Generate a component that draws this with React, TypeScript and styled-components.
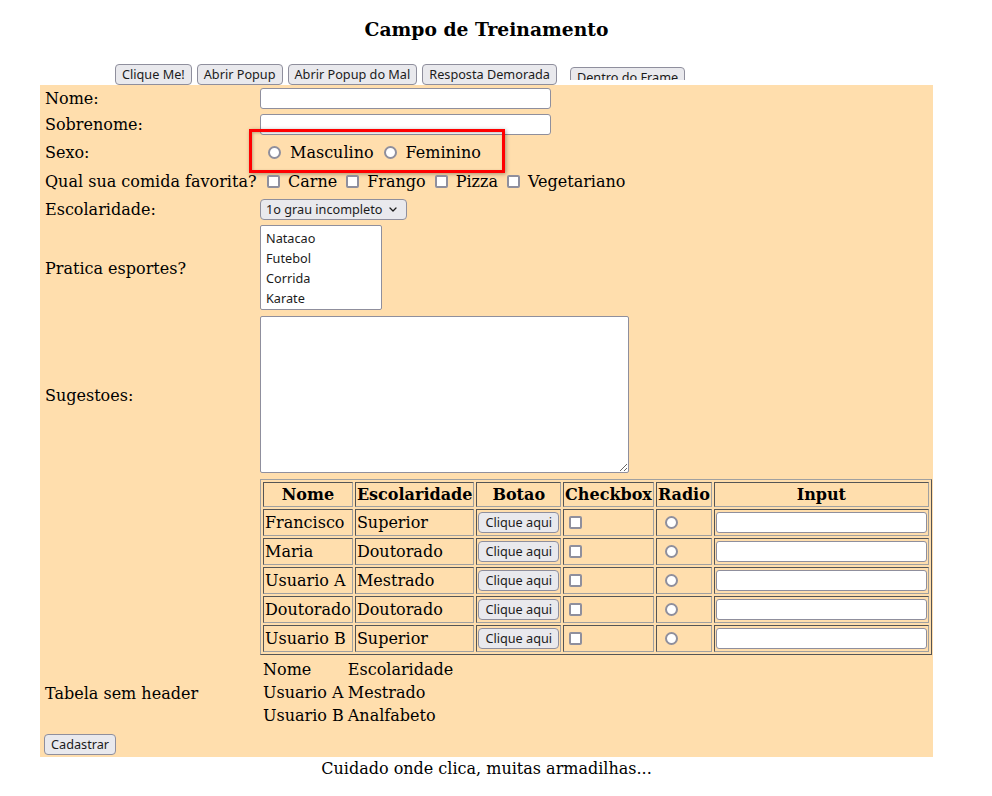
import styled, { createGlobalStyle, css } from 'styled-components';

const GlobalStyles = createGlobalStyle`
  html, body {
    margin: 0;
    padding: 0;
    background: #fff;
  }
  body {
    font-family: "DejaVu Serif", serif;
    font-size: 16px;
    color: #000;
  }
`;

const controlFont = `"Noto Sans", "DejaVu Sans", sans-serif`;

const Page = styled.main`
  width: 893px;
  margin-left: 40px;
`;

const Heading = styled.h3`
  margin: 0;
  padding-top: 18px;
  font-size: 18.72px;
  line-height: 22px;
  font-weight: bold;
  text-align: center;
`;

const ButtonBar = styled.div`
  display: flex;
  align-items: flex-start;
  gap: 5px;
  height: 21px;
  margin-top: 24px;
  padding-left: 75px;
`;

const ActionButton = styled.button`
  box-sizing: border-box;
  height: 21px;
  margin: 0;
  padding: 0 6px;
  border: 1px solid #8f8f9d;
  border-radius: 4px;
  background: #e9e9ed;
  color: #1b1b1b;
  font-family: ${controlFont};
  font-size: 12.7px;
  line-height: 19px;
  white-space: nowrap;
  cursor: pointer;
`;

const FrameWindow = styled.div`
  margin: 3px 0 0 8px;
  height: 13px;
  overflow: hidden;
`;

const FormPanel = styled.form`
  display: grid;
  grid-template-columns: 215px 1fr;
  grid-template-rows: 21px 21px 24px 24px 22px 86px 158px 176px 69px 21px;
  row-gap: 5px;
  align-items: center;
  padding: 3px 3px 2px 5px;
  background: #ffdead;
`;

const FieldLabel = styled.label<{ $lift?: number }>`
  grid-column: 1;
  margin-top: ${(p) => -(p.$lift ?? 0)}px;
  white-space: nowrap;
  line-height: 19px;
`;

const Field = styled.div<{ $align?: 'start' | 'center' | 'stretch' }>`
  grid-column: 2;
  display: flex;
  align-items: center;
  align-self: ${(p) => p.$align ?? 'center'};
`;

const TextInput = styled.input<{ $width: number }>`
  box-sizing: border-box;
  width: ${(p) => p.$width}px;
  height: 21px;
  margin: 0;
  padding: 0 4px;
  border: 1px solid #8f8f9d;
  border-radius: 3px;
  background: #fff;
  font-family: ${controlFont};
  font-size: 12.7px;
`;

const ChoiceGroup = styled.div<{ $highlight?: boolean; $inset: number; $gap: number }>`
  position: relative;
  display: flex;
  align-items: center;
  gap: ${(p) => p.$gap}px;
  height: 100%;
  padding-left: ${(p) => p.$inset}px;

  ${(p) =>
    p.$highlight &&
    css`
      &::after {
        content: '';
        position: absolute;
        left: -11px;
        top: -11px;
        width: 256px;
        height: 44px;
        box-sizing: border-box;
        border: 3px solid #ff0000;
        box-shadow: 1px 1px 4px rgba(0, 0, 0, 0.35), inset 1px 1px 3px rgba(0, 0, 0, 0.25);
        pointer-events: none;
      }
    `}
`;

const Choice = styled.label<{ $gap: number }>`
  display: inline-flex;
  align-items: center;
  gap: ${(p) => p.$gap}px;
  line-height: 19px;
  white-space: nowrap;
`;

const Tick = styled.input<{ $inset?: number }>`
  appearance: none;
  box-sizing: border-box;
  flex: none;
  width: 13px;
  height: 13px;
  margin: 0 0 0 ${(p) => p.$inset ?? 0}px;
  border: 2px solid #8f8f9d;
  border-radius: ${(p) => (p.type === 'radio' ? '50%' : '2px')};
  background: #fff;
`;

const SelectBox = styled.div`
  box-sizing: border-box;
  display: flex;
  align-items: center;
  justify-content: space-between;
  width: 147px;
  height: 21px;
  padding: 0 9px 0 5px;
  border: 1px solid #8f8f9d;
  border-radius: 4px;
  background: #e9e9ed;
  color: #1b1b1b;
  font-family: ${controlFont};
  font-size: 12.7px;
  white-space: nowrap;
`;

const ListBox = styled.ul`
  box-sizing: border-box;
  width: 122px;
  height: 85px;
  margin: 0;
  padding: 2px 0;
  list-style: none;
  overflow: hidden;
  border: 1px solid #8f8f9d;
  border-radius: 2px;
  background: #fff;
  color: #1b1b1b;
  font-family: ${controlFont};
  font-size: 12.7px;
`;

const ListOption = styled.li`
  height: 20px;
  padding: 0 5px;
  line-height: 20px;
`;

const NotesArea = styled.textarea`
  box-sizing: border-box;
  width: 369px;
  height: 157px;
  margin: 0;
  border: 1px solid #8f8f9d;
  border-radius: 2px;
  background: #fff;
`;

const DataTable = styled.table`
  border-collapse: separate;
  border-spacing: 2px;
  border: 1px solid;
  border-color: #a0a0a0 #555 #555 #a0a0a0;
  font-size: 16px;
`;

const HeaderRow = styled.tr`
  height: 25px;
`;

const BodyRow = styled.tr`
  height: 27px;
`;

const cellBorder = css`
  padding: 1px;
  border: 1px solid;
  border-color: #555 #a0a0a0 #a0a0a0 #555;
  white-space: nowrap;
  vertical-align: middle;
`;

const HeadCell = styled.th`
  ${cellBorder};
  font-weight: bold;
  text-align: center;
`;

const Cell = styled.td`
  ${cellBorder};
  text-align: left;
`;

const CellControl = styled.div`
  display: flex;
  align-items: center;
`;

const PlainTable = styled.table`
  border-collapse: separate;
  border-spacing: 2px;
  margin-top: -4px;
`;

const PlainCell = styled.td`
  padding: 1px;
  line-height: 19px;
  white-space: nowrap;
`;

const SubmitButton = styled(ActionButton)`
  grid-column: 1;
  justify-self: start;
  margin-left: -1px;
`;

const Footer = styled.p`
  margin: 2px 0 0;
  line-height: 19px;
  text-align: center;
`;

const people = [
  { name: 'Francisco', level: 'Superior' },
  { name: 'Maria', level: 'Doutorado' },
  { name: 'Usuario A', level: 'Mestrado' },
  { name: 'Doutorado', level: 'Doutorado' },
  { name: 'Usuario B', level: 'Superior' },
];

const foods = ['Carne', 'Frango', 'Pizza', 'Vegetariano'];
const sports = ['Natacao', 'Futebol', 'Corrida', 'Karate'];

function Chevron() {
  return (
    <svg width="8" height="5" viewBox="0 0 8 5" aria-hidden>
      <path d="M1 1 L4 4 L7 1" fill="none" stroke="#1b1b1b" strokeWidth="1.3" strokeLinecap="round" strokeLinejoin="round" />
    </svg>
  );
}

export default function App() {
  return (
    <>
      <GlobalStyles />
      <Page>
        <Heading>Campo de Treinamento</Heading>

        <ButtonBar>
          <ActionButton type="button">Clique Me!</ActionButton>
          <ActionButton type="button">Abrir Popup</ActionButton>
          <ActionButton type="button">Abrir Popup do Mal</ActionButton>
          <ActionButton type="button">Resposta Demorada</ActionButton>
          <FrameWindow>
            <ActionButton type="button">Dentro do Frame</ActionButton>
          </FrameWindow>
        </ButtonBar>

        <FormPanel onSubmit={(e) => e.preventDefault()}>
          <FieldLabel>Nome:</FieldLabel>
          <Field>
            <TextInput type="text" $width={291} />
          </Field>

          <FieldLabel>Sobrenome:</FieldLabel>
          <Field>
            <TextInput type="text" $width={291} />
          </Field>

          <FieldLabel>Sexo:</FieldLabel>
          <Field $align="stretch">
            <ChoiceGroup $highlight $inset={8} $gap={10}>
              <Choice $gap={9}>
                <Tick type="radio" name="sexo" />
                Masculino
              </Choice>
              <Choice $gap={9}>
                <Tick type="radio" name="sexo" />
                Feminino
              </Choice>
            </ChoiceGroup>
          </Field>

          <FieldLabel>Qual sua comida favorita?</FieldLabel>
          <Field $align="stretch">
            <ChoiceGroup $inset={7} $gap={9}>
              {foods.map((food) => (
                <Choice key={food} $gap={8}>
                  <Tick type="checkbox" />
                  {food}
                </Choice>
              ))}
            </ChoiceGroup>
          </Field>

          <FieldLabel>Escolaridade:</FieldLabel>
          <Field>
            <SelectBox>
              <span>1o grau incompleto</span>
              <Chevron />
            </SelectBox>
          </Field>

          <FieldLabel>Pratica esportes?</FieldLabel>
          <Field $align="start">
            <ListBox>
              {sports.map((sport) => (
                <ListOption key={sport}>{sport}</ListOption>
              ))}
            </ListBox>
          </Field>

          <FieldLabel>Sugestoes:</FieldLabel>
          <Field $align="start">
            <NotesArea />
          </Field>

          <Field $align="start">
            <DataTable>
              <tbody>
                <HeaderRow>
                  <HeadCell>Nome</HeadCell>
                  <HeadCell>Escolaridade</HeadCell>
                  <HeadCell>Botao</HeadCell>
                  <HeadCell>Checkbox</HeadCell>
                  <HeadCell>Radio</HeadCell>
                  <HeadCell>Input</HeadCell>
                </HeaderRow>
                {people.map((p) => (
                  <BodyRow key={p.name + p.level}>
                    <Cell>{p.name}</Cell>
                    <Cell>{p.level}</Cell>
                    <Cell>
                      <ActionButton type="button">Clique aqui</ActionButton>
                    </Cell>
                    <Cell>
                      <CellControl>
                        <Tick type="checkbox" $inset={4} />
                      </CellControl>
                    </Cell>
                    <Cell>
                      <CellControl>
                        <Tick type="radio" name="tabela" $inset={7} />
                      </CellControl>
                    </Cell>
                    <Cell>
                      <TextInput type="text" $width={211} />
                    </Cell>
                  </BodyRow>
                ))}
              </tbody>
            </DataTable>
          </Field>

          <FieldLabel $lift={3}>Tabela sem header</FieldLabel>
          <Field>
            <PlainTable>
              <tbody>
                <tr>
                  <PlainCell>Nome</PlainCell>
                  <PlainCell>Escolaridade</PlainCell>
                </tr>
                <tr>
                  <PlainCell>Usuario A</PlainCell>
                  <PlainCell>Mestrado</PlainCell>
                </tr>
                <tr>
                  <PlainCell>Usuario B</PlainCell>
                  <PlainCell>Analfabeto</PlainCell>
                </tr>
              </tbody>
            </PlainTable>
          </Field>

          <SubmitButton type="submit">Cadastrar</SubmitButton>
        </FormPanel>

        <Footer>Cuidado onde clica, muitas armadilhas...</Footer>
      </Page>
    </>
  );
}
